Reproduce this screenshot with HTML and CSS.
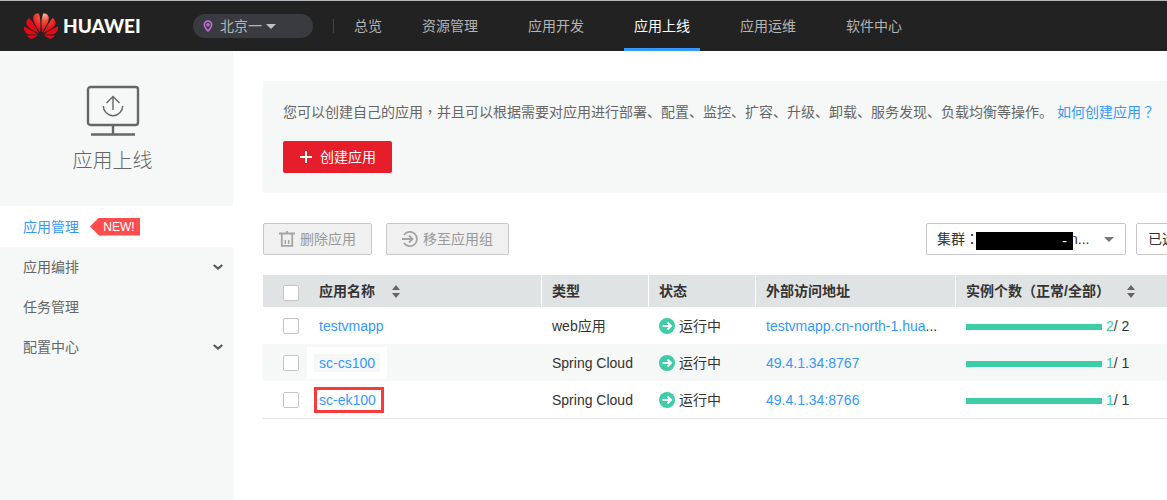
FILE: index.html
```html
<!DOCTYPE html>
<html lang="zh-CN">
<head>
<meta charset="utf-8">
<title>应用上线</title>
<link rel="stylesheet" href="styles.css">
</head>
<body>
<header class="topbar">
  <a class="logo" href="#">
    <svg class="logo-mark" viewBox="0 2.9 24 18.2" aria-hidden="true">
      <defs>
        <radialGradient id="petal" gradientUnits="userSpaceOnUse" cx="14.5" cy="4" r="11">
          <stop offset="0" stop-color="#fbb79a"/>
          <stop offset=".4" stop-color="#f0503c"/>
          <stop offset="1" stop-color="#e30a17"/>
        </radialGradient>
      </defs>
      <path fill="url(#petal)" d="M3.67 6.14S1.82 7.91 1.72 9.78v.35c.08 1.51 1.22 2.4 1.22 2.4 1.83 1.79 6.26 4.04 7.3 4.55 0 0 .06.03.1-.01l.02-.04v-.04C7.52 10.8 3.67 6.14 3.67 6.14zM9.65 18.6c-.02-.08-.1-.08-.1-.08l-7.38.26c.8 1.43 2.15 2.53 3.56 2.2.96-.25 3.16-1.78 3.88-2.3.06-.05.04-.09.04-.09zm.08-.78C6.49 15.63.21 12.28.21 12.28c-.15.46-.2.9-.21 1.3v.07c0 1.07.4 1.82.4 1.82.8 1.69 2.34 2.2 2.34 2.2.7.3 1.4.31 1.4.31.12.02 4.4 0 5.54 0 .05 0 .08-.05.08-.05v-.06c0-.03-.03-.05-.03-.05zM9.06 3.19a3.42 3.42 0 00-2.57 3.15v.41c.03.6.16 1.05.16 1.05.66 2.9 3.86 7.65 4.55 8.65.05.05.1.03.1.03a.1.1 0 00.06-.1c1.06-10.6-1.11-13.42-1.11-13.42-.32.02-1.19.23-1.19.23zm8.3 2.27s-.49-1.8-2.44-2.28c0 0-.57-.14-1.17-.22 0 0-2.18 2.81-1.12 13.43.01.07.06.08.06.08.07.03.1-.03.1-.03.72-1.03 3.9-5.76 4.55-8.64 0 0 .36-1.4.02-2.34zm-2.92 13.07s-.07 0-.09.05c0 0-.01.07.03.1.7.51 2.85 2 3.88 2.3 0 0 .16.05.43.06h.14c.69-.02 1.9-.37 3-2.26l-7.4-.25zm7.83-8.41c.14-2.06-1.94-3.97-1.94-3.98 0 0-3.85 4.66-6.67 10.8 0 0-.03.08.02.13l.04.01h.06c1.06-.53 5.46-2.77 7.28-4.54 0 0 1.15-.93 1.21-2.42zm1.52 2.14s-6.28 3.37-9.52 5.55c0 0-.05.04-.03.11 0 0 .03.06.07.06 1.16 0 5.56 0 5.67-.02 0 0 .57-.02 1.27-.29 0 0 1.56-.5 2.37-2.27 0 0 .73-1.45.17-3.14z"/>
    </svg>
    <span class="logo-name">HUAWEI</span>
  </a>
  <button class="region" type="button">
    <svg class="pin" viewBox="0 0 10 12" aria-hidden="true"><path d="M5 1a3.6 3.6 0 0 0-3.6 3.7C1.400 7.200 5 11 5 11s3.600-3.800 3.600-6.300A3.600 3.600 0 0 0 5 1z"/><circle cx="5" cy="4.700" r="1"/></svg>
    <span>北京一</span>
    <span class="caret"></span>
  </button>
  <nav class="nav">
    <a href="#">总览</a>
    <a href="#">资源管理</a>
    <a href="#">应用开发</a>
    <a class="active" href="#">应用上线</a>
    <a href="#">应用运维</a>
    <a href="#">软件中心</a>
  </nav>
</header>
<div class="page">
  <aside class="sidebar">
    <div class="side-head">
      <svg class="monitor" viewBox="0 0 54 52" aria-hidden="true">
        <rect x="2" y="2" width="50" height="38" rx="2.500" stroke-width="2.400"/>
        <path stroke-width="2.400" d="M27 40v9M5 49.500h44"/>
        <path stroke-width="1.400" d="M27 25V11.500M20.500 18l6.500-6.500 6.500 6.500M17.300 21a9.700 9.700 0 0 0 19.400 0"/>
      </svg>
      <h1>应用上线</h1>
    </div>
    <nav class="side-nav">
      <a class="current" href="#">应用管理<span class="new">NEW!</span></a>
      <a href="#">应用编排<svg class="chevron" viewBox="0 0 10 6" aria-hidden="true"><path d="M.7 1 5 4.600 9.300 1"/></svg></a>
      <a href="#">任务管理</a>
      <a href="#">配置中心<svg class="chevron" viewBox="0 0 10 6" aria-hidden="true"><path d="M.7 1 5 4.600 9.300 1"/></svg></a>
    </nav>
  </aside>
  <main class="main">
    <section class="intro">
      <p>您可以创建自己的应用<span class="mid" lang="zh-Hant">，</span>并且可以根据需要对应用进行部署、配置、监控、扩容、升级、卸载、服务发现、负载均衡等操作。<a href="#">如何创建应用<span class="mid" lang="zh-Hant">？</span></a></p>
      <button class="create" type="button"><svg viewBox="0 0 12 12" aria-hidden="true"><path d="M6 0v12M0 6h12"/></svg>创建应用</button>
    </section>
    <div class="toolbar">
      <button class="tool" type="button" disabled>
        <svg viewBox="0 0 16 16" aria-hidden="true"><path stroke-width="1.800" d="M0 2.500h16M2.800 3v11.900h10.400V3M8 0v3"/><path stroke-width="1.500" d="M6.300 13V9M9.700 13V9"/></svg>删除应用
      </button>
      <button class="tool" type="button" disabled>
        <svg viewBox="0 0 16 16" aria-hidden="true"><path stroke-width="1.800" d="M2 4a7.100 7.100 0 1 1 0 8M0 8h10M7 4.500 10.500 8 7 11.500"/></svg>移至应用组
      </button>
      <div class="filter cluster">
        <label for="cluster">集群<span class="mid" lang="zh-Hant">：</span></label><span class="masked">-</span>
        <select id="cluster"><option>n...</option></select>
        <span class="caret"></span>
      </div>
      <div class="filter">
        <select id="picked" aria-label="已选"><option>已选</option></select>
      </div>
    </div>
    <table class="apps">
      <colgroup><col class="c-check"><col class="c-name"><col class="c-type"><col class="c-state"><col class="c-addr"><col></colgroup>
      <thead>
        <tr>
          <th class="check"><input type="checkbox" aria-label="全选"></th>
          <th class="name">应用名称<svg class="sort" viewBox="0 0 8 13" aria-hidden="true"><path d="M0 5l4-5 4 5zM0 8h8l-4 5z"/></svg></th>
          <th>类型</th>
          <th>状态</th>
          <th>外部访问地址</th>
          <th>实例个数<span class="mid" lang="zh-Hant">（</span>正常/全部<span class="mid" lang="zh-Hant">）</span><svg class="sort" viewBox="0 0 8 13" aria-hidden="true"><path d="M0 5l4-5 4 5zM0 8h8l-4 5z"/></svg></th>
        </tr>
      </thead>
      <tbody>
        <tr>
          <td class="check"><input type="checkbox" aria-label="testvmapp"></td>
          <td class="name"><a href="#">testvmapp</a></td>
          <td>web应用</td>
          <td><span class="state"><svg viewBox="0 0 16 16" aria-hidden="true"><circle cx="8" cy="8" r="8"/><path d="M3.500 8h8.500M8.500 4.500 12 8l-3.500 3.500"/></svg>运行中</span></td>
          <td><a href="#">testvmapp.cn-north-1.hua</a>...</td>
          <td><span class="count"><span class="bar"></span><span><b>2</b>/ 2</span></span></td>
        </tr>
        <tr>
          <td class="check"><input type="checkbox" aria-label="sc-cs100"></td>
          <td class="name"><span class="patch"><a href="#">sc-cs100</a></span></td>
          <td>Spring Cloud</td>
          <td><span class="state"><svg viewBox="0 0 16 16" aria-hidden="true"><circle cx="8" cy="8" r="8"/><path d="M3.500 8h8.500M8.500 4.500 12 8l-3.500 3.500"/></svg>运行中</span></td>
          <td><a href="#">49.4.1.34:8767</a></td>
          <td><span class="count"><span class="bar"></span><span><b>1</b>/ 1</span></span></td>
        </tr>
        <tr>
          <td class="check"><input type="checkbox" aria-label="sc-ek100"></td>
          <td class="name"><a class="marked" href="#">sc-ek100</a></td>
          <td>Spring Cloud</td>
          <td><span class="state"><svg viewBox="0 0 16 16" aria-hidden="true"><circle cx="8" cy="8" r="8"/><path d="M3.500 8h8.500M8.500 4.500 12 8l-3.500 3.500"/></svg>运行中</span></td>
          <td><a href="#">49.4.1.34:8766</a></td>
          <td><span class="count"><span class="bar"></span><span><b>1</b>/ 1</span></span></td>
        </tr>
      </tbody>
    </table>
  </main>
</div>
</body>
</html>
```
FILE: styles.css
```css
* { box-sizing: border-box; }

body {
  margin: 0;
  min-height: 100vh;
  display: flex;
  flex-direction: column;
  overflow-x: hidden;
  background: #fff;
  color: #333;
  font: 400 14px/20px "Liberation Sans", "Noto Sans CJK SC", sans-serif;
}

a { color: #3399ff; text-decoration: none; }
button, select, input { font: inherit; margin: 0; }
svg { flex: none; }

/* Punctuation centred in its em box */
.mid { font-family: "Noto Sans CJK TC", sans-serif; line-height: 1; }

.caret {
  border: 5px solid transparent;
  border-top-color: #c0c0c0;
  border-bottom: 0;
}

/* Top bar */
.topbar {
  display: flex;
  align-items: center;
  height: 51px;
  padding-left: 24px;
  border-top: 1px solid #b4b8b8;
  background: #222;
  white-space: nowrap;
}
.logo { display: flex; align-items: center; gap: 5px; width: 169px; color: #fff; }
.logo-mark { width: 34px; height: 26px; }
.logo-name { font: 900 19px/24px Lato, sans-serif; }
.region {
  display: flex;
  align-items: center;
  width: 120px;
  height: 24px;
  padding: 0 10px;
  border: 0;
  border-radius: 12px;
  background: #3a3b41;
  color: #b4b4b4;
}
.pin { width: 10px; height: 12px; margin-right: 7px; fill: none; stroke: #c86ee0; stroke-width: 1.5; }
.region .caret { margin-left: 4px; }
.nav {
  display: flex;
  align-items: center;
  gap: 30px;
  margin-left: 20px;
  height: 100%;
}
.nav::before { content: ""; width: 1px; height: 14px; margin-right: -10px; background: #444; }
.nav a { padding: 15px 10px 12px; border-bottom: 3px solid transparent; color: #b4b4b4; }
.nav a:first-child { padding-left: 0; padding-right: 0; }
.nav .active { border-color: #3399ff; color: #fff; }

/* Layout */
.page { display: flex; flex: 1; }
.sidebar { flex: none; width: 233px; background: #f6f8f8; }
.side-head {
  display: flex;
  flex-direction: column;
  align-items: center;
  height: 155px;
  padding: 34px 8px 0 0;
  color: #666;
}
.monitor { width: 54px; height: 52px; fill: none; stroke: #666; }
h1 { margin: 10px 0 0; font-size: 20px; font-weight: 300; line-height: 28px; }
.side-nav { display: flex; flex-direction: column; }
.side-nav a {
  display: flex;
  align-items: center;
  height: 40px;
  padding: 0 10px 0 23px;
  color: #666;
}
.side-nav .current { height: 41px; background: #fff; color: #3399ff; }
.new {
  width: 50px;
  margin-left: 11px;
  padding-left: 8px;
  background: #ff4c4c;
  color: #fff;
  font-size: 12px;
  line-height: 18px;
  text-align: center;
  clip-path: polygon(0 50%, 9px 0, 100% 0, 100% 100%, 9px 100%);
}
.chevron { width: 10px; height: 6px; margin-left: auto; fill: none; stroke: #555; stroke-width: 2; }

.main { flex: 1; min-width: 1070px; padding: 30px 0 0 30px; }
.intro { padding: 21px 20px 20px; background: #f6f8f8; color: #666; white-space: nowrap; }
.intro p { margin: 0 0 19px; }
.intro a { margin-left: 4px; }
.create {
  display: flex;
  align-items: center;
  gap: 8px;
  height: 32px;
  padding: 0 16px 0 17px;
  border: 0;
  border-radius: 2px;
  background: #e61e2b;
  color: #fff;
}
.create svg { width: 12px; height: 12px; stroke: #fff; stroke-width: 2; }

/* Toolbar */
.toolbar { display: flex; margin: 30px 0 20px; white-space: nowrap; }
.tool {
  display: flex;
  align-items: center;
  gap: 5px;
  height: 32px;
  margin-right: 14px;
  padding: 0 15px;
  border: 1px solid #c8c8c8;
  border-radius: 2px;
  background: #f0f0f0;
  color: #999;
}
.tool svg { width: 16px; height: 16px; fill: none; stroke: #a4a4a4; }
.filter {
  display: flex;
  align-items: center;
  width: 167px;
  height: 32px;
  padding: 0 11px;
  border: 1px solid #c8c8c8;
  border-radius: 2px;
}
.cluster { width: 200px; margin: 0 10px 0 auto; padding: 0 11px 0 10px; }
.cluster label { width: 39px; white-space: nowrap; }
.filter select { appearance: none; flex: 1; min-width: 0; padding: 0; border: 0; background: transparent; color: #333; }
.masked { z-index: 1; width: 97px; margin-top: 3px; padding-right: 6px; background: #000; color: #fff; line-height: 18px; text-align: right; }
.cluster select { margin-left: -3px; }
.filter .caret { border-top-color: #777; }

/* Application table */
.apps { width: 100%; table-layout: fixed; border-collapse: separate; border-spacing: 0; border-bottom: 1px solid #dfe3e4; }
.c-check { width: 44px; }
.c-name { width: 235px; }
.c-type, .c-state { width: 107px; }
.c-addr { width: 200px; }
th { height: 32px; padding: 0 10px; border-right: 1px solid #fff; background: #dfe3e4; font-weight: 700; text-align: left; white-space: nowrap; }
td { height: 37px; padding: 0 10px; white-space: nowrap; }
.apps .check { padding: 0 0 0 20px; border: 0; }
.apps th.check { padding-top: 3px; }
.apps .name { padding-left: 12px; }
tbody tr:nth-child(even) { background: #f6f8f8; }
input[type="checkbox"] {
  display: block;
  appearance: none;
  width: 16px;
  height: 16px;
  border: 1px solid #c4c4c4;
  border-radius: 2px;
  background: #fff;
}
.sort { width: 8px; height: 13px; margin-left: 17px; vertical-align: -2px; fill: #666; }
.state { display: flex; align-items: center; gap: 4px; }
.state svg { width: 16px; height: 16px; fill: #3dcca6; }
.state path { fill: none; stroke: #fff; stroke-width: 2; }
.count { display: flex; align-items: center; gap: 4px; }
.bar { width: 136px; height: 6px; margin-top: 2px; background: #3dcca6; }
.count b { color: #3dcca6; font-weight: 400; }
.patch { display: inline-block; margin-left: -12px; padding: 7px; background: #fff; vertical-align: top; }
.patch a { display: block; padding: 0 5px; background: #f6f8f8; line-height: 18px; }
.marked { display: inline-block; margin-left: -5px; padding: 0 5px 0 2px; border: 3px solid #f93a3a; vertical-align: top; }
```
